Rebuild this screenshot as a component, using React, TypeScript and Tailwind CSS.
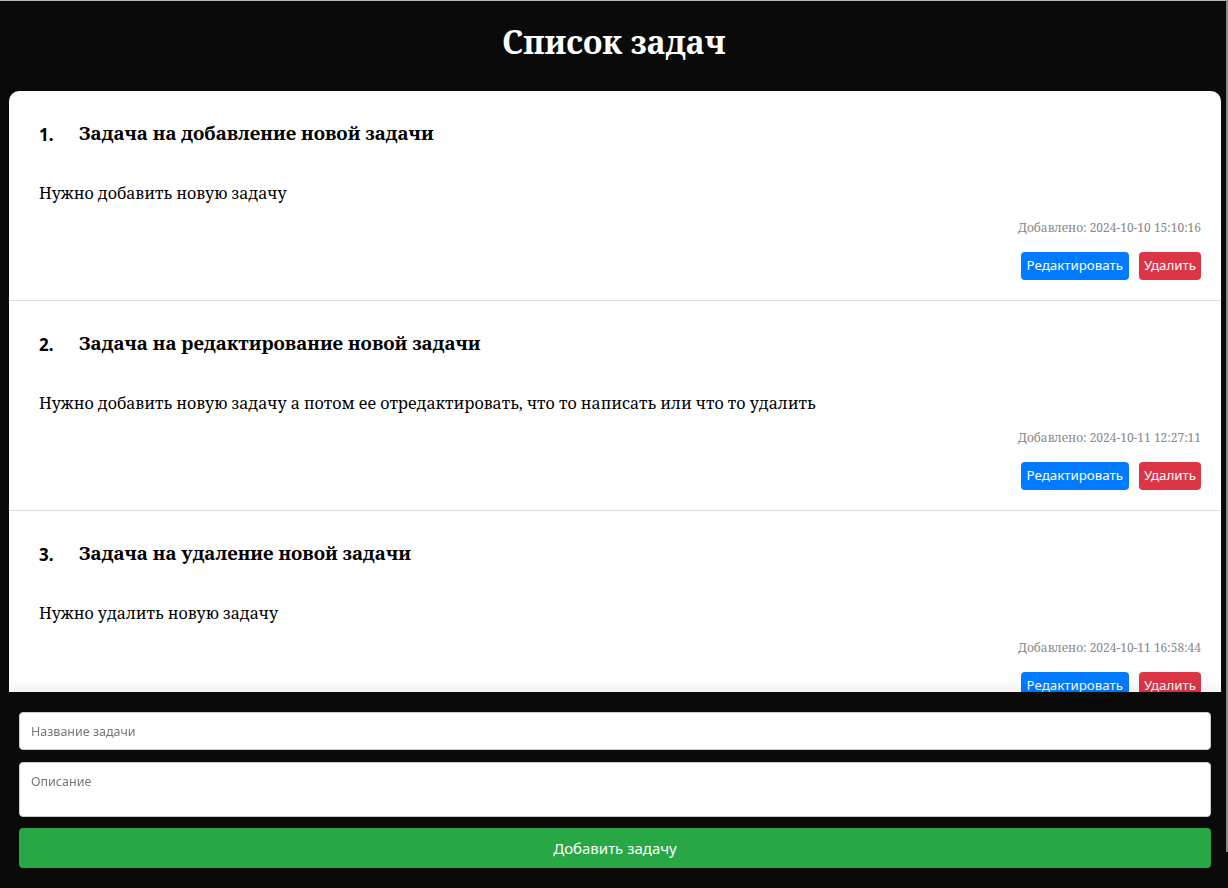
import React from 'react';

interface Task {
  id: number;
  title: string;
  description: string;
  createdAt: string;
}

const tasks: Task[] = [
  {
    id: 1,
    title: 'Задача на добавление новой задачи',
    description: 'Нужно добавить новую задачу',
    createdAt: '2024-10-10 15:10:16',
  },
  {
    id: 2,
    title: 'Задача на редактирование новой задачи',
    description:
      'Нужно добавить новую задачу а потом ее отредактировать, что то написать или что то удалить',
    createdAt: '2024-10-11 12:27:11',
  },
  {
    id: 3,
    title: 'Задача на удаление новой задачи',
    description: 'Нужно удалить новую задачу',
    createdAt: '2024-10-11 16:58:44',
  },
];

const serif = "font-['Noto_Serif','DejaVu_Serif',serif]";
const sans = "font-['Noto_Sans','Open_Sans',sans-serif]";

const TaskItem: React.FC<{ task: Task; index: number }> = ({ task, index }) => (
  <li className="border-b border-[#dddddd] pl-[30px] pr-[20px] pt-[30px] pb-[20px]">
    <div className="flex h-[24px] items-center">
      <span className={`w-[40px] pt-[3px] text-[17px] font-bold text-black ${sans}`}>{index + 1}.</span>
      <h3 className={`text-[18.72px] font-bold text-black ${serif}`}>{task.title}</h3>
    </div>
    <p className={`mt-[36px] h-[24px] text-[16px] leading-[24px] text-black ${serif}`}>
      {task.description}
    </p>
    <p className={`mt-[14px] h-[18px] text-right text-[12px] leading-[18px] text-[#888888] ${serif}`}>
      Добавлено: {task.createdAt}
    </p>
    <div className="mt-[15px] flex justify-end gap-[10px]">
      <button className={`h-[28px] rounded-[4px] bg-[#007bff] px-[6px] text-[13.33px] text-white ${sans}`}>
        Редактировать
      </button>
      <button className={`h-[28px] rounded-[4px] bg-[#dc3545] px-[5px] text-[13.33px] text-white ${sans}`}>
        Удалить
      </button>
    </div>
  </li>
);

export default function App() {
  return (
    <div className="relative min-h-[888px] border-t border-[#b5b5b5] bg-[#0a0a0a]">
      <header className="flex h-[90px] justify-center pt-[19px]">
        <h1 className={`text-[32px] font-bold leading-[44px] text-white ${serif}`}>Список задач</h1>
      </header>

      <main className="ml-[9px] w-[1212px] rounded-t-[10px] bg-white pb-[200px]">
        <ul>
          {tasks.map((task, i) => (
            <TaskItem key={task.id} task={task} index={i} />
          ))}
        </ul>
      </main>

      <div className="fixed bottom-0 left-[9px] h-[196px] w-[1212px] bg-[#0a0a0a] px-[10px] pt-[20px] shadow-[0_-6px_10px_rgba(0,0,0,0.06)]">
        <input
          type="text"
          placeholder="Название задачи"
          className={`block h-[38px] w-full rounded-[4px] border border-[#cccccc] bg-white px-[11px] text-[12.5px] text-black placeholder-[#777777] outline-none ${sans}`}
        />
        <textarea
          placeholder="Описание"
          className={`mt-[12px] block h-[55px] w-full resize-none rounded-[4px] border border-[#cccccc] bg-white px-[11px] pt-[10px] text-[12.5px] text-black placeholder-[#777777] outline-none ${sans}`}
        />
        <button className={`mt-[11px] h-[40px] w-full rounded-[4px] bg-[#28a745] text-[15px] text-white ${sans}`}>
          Добавить задачу
        </button>
      </div>

      <div className="fixed right-0 top-0 h-[852px] w-[2px] bg-[#8a8a8a]" />
    </div>
  );
}
